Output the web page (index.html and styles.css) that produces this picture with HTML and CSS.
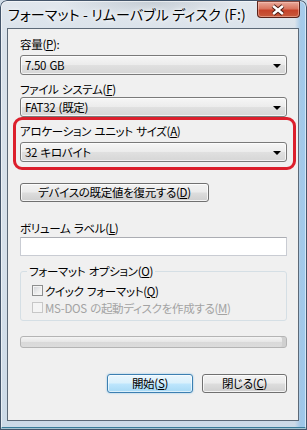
FILE: index.html
```html
<!DOCTYPE html>
<html lang="ja">
<head>
<meta charset="utf-8">
<title>フォーマット</title>
<link rel="stylesheet" href="styles.css">
</head>
<body>
<div class="window">
  <div class="titlebar">
    <span class="title">フォーマット - リムーバブル ディスク (F:)</span>
    <div class="close">
      <svg width="43" height="17" viewBox="0 0 43 17">
        <path d="M16.5 5 L26.5 13 M26.5 5 L16.5 13" stroke="#4b1c14" stroke-width="4.6" fill="none"/>
        <path d="M16.5 5 L26.5 13 M26.5 5 L16.5 13" stroke="#ffffff" stroke-width="2.6" fill="none"/>
      </svg>
    </div>
  </div>
  <div class="client">
    <div class="label">容量(<u>P</u>):</div>
    <div class="combo c1"><span>7.50 GB</span><i class="arrow"></i></div>
    <div class="label l2">ファイル システム(<u>F</u>)</div>
    <div class="combo"><span>FAT32 (既定)</span><i class="arrow"></i></div>
    <div class="highlight">
      <div class="label">アロケーション ユニット サイズ(<u>A</u>)</div>
      <div class="combo c3"><span>32 キロバイト</span><i class="arrow"></i></div>
    </div>
    <div class="btn restore">デバイスの既定値を復元する(<u>D</u>)</div>
    <div class="label l4">ボリューム ラベル(<u>L</u>)</div>
    <div class="textbox"></div>
    <fieldset class="group">
      <legend>フォーマット オプション(<u>O</u>)</legend>
      <div class="check first"><span class="box"></span><span>クイック フォーマット(<u>Q</u>)</span></div>
      <div class="check disabled"><span class="box"></span><span>MS-DOS の起動ディスクを作成する(<u>M</u>)</span></div>
    </fieldset>
    <div class="progress"></div>
    <div class="actions">
      <div class="btn default start">開始(<u>S</u>)</div>
      <div class="btn close-btn">閉じる(<u>C</u>)</div>
    </div>
  </div>
</div>
</body>
</html>
```

FILE: styles.css
```css
html, body {
  margin: 0;
  padding: 0;
  background: #cfdbe6;
}
body {
  font-family: "Noto Sans CJK JP", "Noto Sans", sans-serif;
  font-size: 11.5px;
  letter-spacing: -0.3px;
  word-spacing: 1px;
  color: #000;
  font-feature-settings: "palt";
}
u {
  text-decoration: underline;
  text-underline-offset: 1px;
  text-decoration-thickness: 1px;
}
.window {
  width: 307px;
  height: 430px;
  box-sizing: border-box;
  padding: 0 8px 9px 7px;
  display: flex;
  flex-direction: column;
  border-radius: 7px 7px 0 0;
  background:
    linear-gradient(90deg, rgba(0,0,0,0) 96%, rgba(120,180,230,0.55) 98%, rgba(140,195,240,0.7) 100%),
    radial-gradient(ellipse 90px 14px at 150px 2px, rgba(150,160,170,0.35), rgba(150,160,170,0)),
    linear-gradient(180deg, #e1e7ed 0%, #d8e1ea 10%, #d6e0ea 60%, #ccdae7 100%);
  box-shadow: inset 0 0 0 1px #44556a, inset 0 0 0 2px rgba(255,255,255,0.55), inset 0 -2px 0 1px #3a7c9a;
}
.titlebar {
  height: 28px;
  display: flex;
  align-items: flex-start;
  flex: none;
}
.title {
  padding: 5px 0 0 1px;
  font-size: 14px;
  letter-spacing: 0.15px;
  word-spacing: 0;
  line-height: 18px;
  white-space: nowrap;
  text-shadow: 0 0 6px rgba(255,255,255,0.95), 0 0 3px rgba(255,255,255,0.9);
}
.close {
  margin-left: auto;
  margin-top: 1px;
  margin-right: -1px;
  width: 43px;
  height: 17px;
  box-sizing: border-box;
  border: 1px solid #5a231a;
  border-top-color: #8a4a40;
  border-radius: 0 0 4px 4px;
  background: linear-gradient(180deg, #e9a99a 0%, #d9755f 45%, #c6432a 55%, #c75a3c 100%);
  box-shadow: inset 0 0 0 1px rgba(255,210,200,0.45);
  display: flex;
}
.close svg {
  margin: -1px 0 0 -1px;
}
.client {
  flex: 1;
  border: 1px solid #5c6977;
  background: #f0f0f0;
  padding: 8px 11px 0 12px;
  display: flex;
  flex-direction: column;
}
.label {
  line-height: 15px;
  height: 15px;
  white-space: nowrap;
}
.l2 { margin-top: 7px; }
.l4 { margin-top: 19px; }
.combo {
  height: 20px;
  box-sizing: border-box;
  border: 1px solid #7a7a7a;
  border-radius: 3px;
  background: linear-gradient(180deg, #f6f6f6 0%, #ececec 48%, #e0e0e0 52%, #d6d6d6 100%);
  box-shadow: inset 0 0 0 1px rgba(255,255,255,0.7);
  display: flex;
  align-items: center;
  padding: 0 5px 0 4px;
  line-height: 16px;
}
.c1 { margin-top: 3px; }
.c3 { margin-top: 3px; }
.arrow {
  margin-left: auto;
  width: 0;
  height: 0;
  border-left: 4px solid transparent;
  border-right: 4px solid transparent;
  border-top: 4px solid #000;
  margin-top: 1px;
}
.highlight {
  margin: 0 -9px 0 -7px;
  border: 3px solid #dc1f2c;
  border-radius: 9px;
  padding: 4px 6px 5px 4px;
}
.btn {
  height: 19px;
  box-sizing: border-box;
  border: 1px solid #707070;
  border-radius: 3px;
  background: linear-gradient(180deg, #f2f2f2 0%, #ebebeb 48%, #dddddd 52%, #cfcfcf 100%);
  box-shadow: inset 0 0 0 1px rgba(255,255,255,0.75);
  text-align: center;
  line-height: 17px;
  white-space: nowrap;
}
.restore {
  margin-top: 13px;
  width: 189px;
}
.textbox {
  margin-top: 1px;
  height: 19px;
  box-sizing: border-box;
  background: #fff;
  border: 1px solid #c9ccd3;
  border-top-color: #abadb3;
}
.group {
  margin: 8px 0 0 0;
  padding: 0 0 4px 6px;
  border: 1px solid #d5dfe5;
  border-radius: 3px;
  min-width: 0;
}
.group legend {
  padding: 0 2px;
  line-height: 15px;
  white-space: nowrap;
}
.check {
  height: 17px;
  display: flex;
  align-items: center;
  gap: 2px;
  margin-left: 5px;
  white-space: nowrap;
}
.check.first { margin-top: 3px; }
.box {
  width: 11px;
  height: 11px;
  box-sizing: border-box;
  border: 1px solid #8e8f8f;
  background: linear-gradient(135deg, #cfd2d6 0%, #eeeeee 60%, #fafafa 100%);
  box-shadow: inset 0 0 0 1px #f4f4f4;
  flex: none;
}
.check.disabled { color: #a3a3a3; }
.check.disabled .box {
  border-color: #c7c7c7;
  background: #f4f4f4;
  box-shadow: none;
}
.progress {
  margin-top: 15px;
  height: 12px;
  box-sizing: border-box;
  border: 1px solid #b4b4b4;
  border-radius: 3px;
  background: linear-gradient(180deg, #f4f4f4 0%, #e6e6e6 50%, #d9d9d9 51%, #dcdcdc 100%);
  box-shadow: inset -4px 0 0 #d0d0d0;
}
.actions {
  margin-top: 26px;
  display: flex;
  justify-content: flex-end;
  gap: 9px;
}
.start { width: 86px; }
.close-btn { width: 85px; }
.default {
  border-color: #3c7fb1;
  background: linear-gradient(180deg, #eaf6fd 0%, #d9f0fc 48%, #bee6fd 52%, #a7d9f5 100%);
  box-shadow: inset 0 0 0 1px rgba(255,255,255,0.6), 0 0 2px rgba(60,160,220,0.6);
}
```
